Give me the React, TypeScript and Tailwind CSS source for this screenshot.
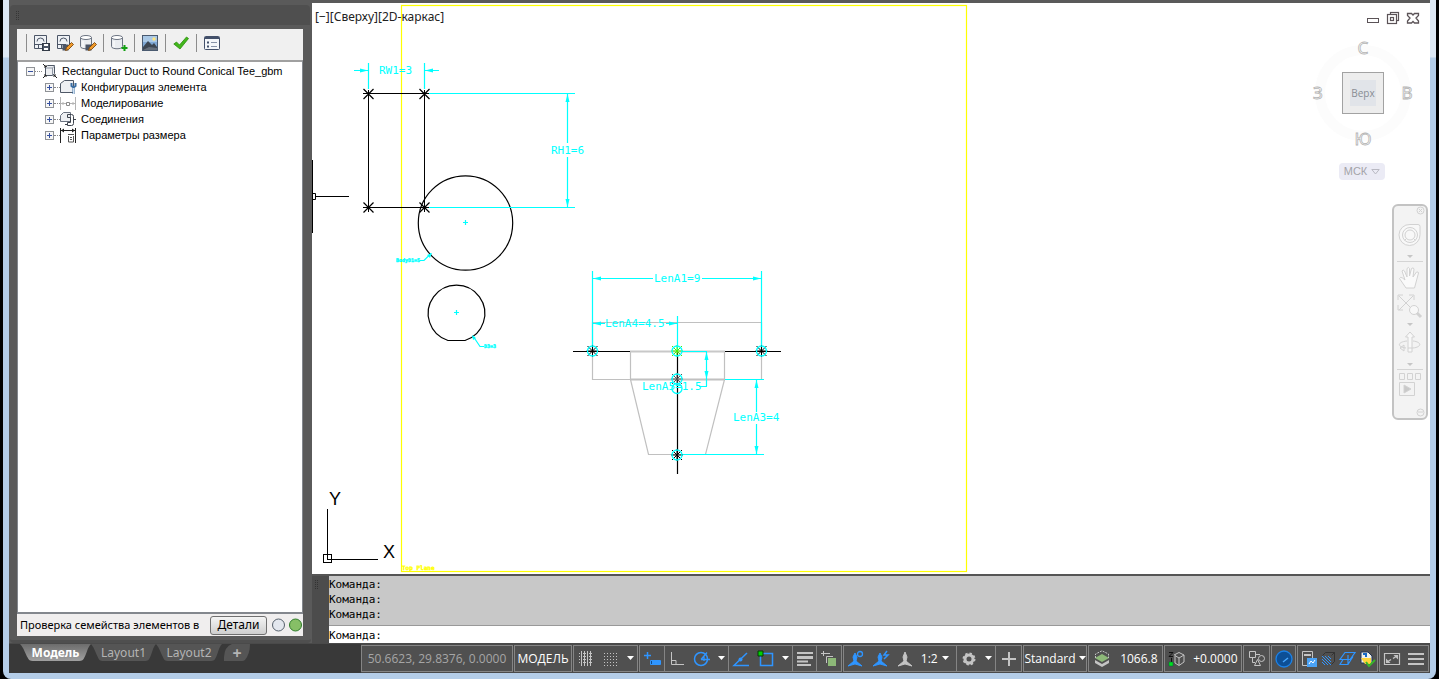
import { useState, type ReactNode } from "react";
import clsx from "clsx";

type Point = [number, number];

interface TreeItem {
  label: string;
  icon: ReactNode;
}

const BLUE = "#2f95ff";
const GRAY = "#c4c4c4";
const CYAN = "#00ffff";

/* ---------- Toolbar icons ---------- */

const Disk = () => (
  <g>
    <rect x="8.5" y="8.5" width="7" height="7" fill="#4b5566" stroke="#333b47" />
    <rect x="10" y="9" width="4" height="2" fill="#fff" />
    <rect x="10" y="13" width="4" height="2" fill="#fff" />
  </g>
);

const Pencil = () => (
  <path d="M8.5 15.5l1-3 5-5 2 2-5 5z" fill="#f09a2c" stroke="#7a4a12" strokeWidth=".9" />
);

const PartFrame = () => (
  <g fill="#eef1f5" stroke="#4b5566">
    <path d="M.5.5h12v13H.5z" />
    <path d="M3 6.500a3.500 3.500 0 1 1 7 0M1 9.500h8M4.500 10v3" fill="none" />
  </g>
);

const Cylinder = () => (
  <g fill="#e9ecf0" stroke="#6c7482">
    <path d="M.5 2.500v9c0 3 11 3 11 0v-9" />
    <ellipse cx="6" cy="2.500" rx="5.500" ry="2" fill="#fff" />
    <path d="M3 6v6" stroke="#fff" />
  </g>
);

const toolGroups: { name: string; icon: ReactNode }[][] = [
  [
    { name: "Сохранить", icon: <><PartFrame /><Disk /></> },
    { name: "Сохранить как", icon: <><PartFrame /><rect x="5.500" y="9.500" width="6" height="6" fill="#4b5566" /><Pencil /></> },
    { name: "Изменить каталог", icon: <><Cylinder /><rect x="5.500" y="9.500" width="6" height="6" fill="#4b5566" /><Pencil /></> },
  ],
  [
    {
      name: "Добавить в каталог",
      icon: <><Cylinder /><path d="M13.500 10v6M10.500 13h6" stroke="#12a012" strokeWidth="2" /></>,
    },
  ],
  [
    {
      name: "Изображение",
      icon: (
        <>
          <rect x=".5" y=".5" width="15" height="15" fill="#7fa8d4" stroke="#4a5a70" />
          <rect x="1" y="1" width="14" height="6" fill="#a9c8e6" />
          <path d="M1 12l5-6 4 4 2-2 3 4v3H1z" fill="#3d4652" />
          <path d="M1 15l6-3 8 1v2H1z" fill="#67707c" />
          <circle cx="12" cy="4" r="1.700" fill="#ffe680" />
        </>
      ),
    },
  ],
  [
    {
      name: "Проверить",
      icon: <path d="M.8 9l2.700-2 3 3L13.500 2l2 1.500L7 14z" fill="#42b81c" stroke="#2c8d0d" strokeWidth=".8" />,
    },
  ],
  [
    {
      name: "Свойства",
      icon: (
        <>
          <rect x=".5" y="1.500" width="15" height="13" rx="1" fill="#f4f7fa" stroke="#43506a" />
          <path d="M1 3h14" stroke="#43506a" strokeWidth="2" />
          <path d="M3 7.500h2M3 11.500h2" stroke="#43506a" strokeWidth="2" />
          <path d="M7 7.500h6M7 11.500h6" stroke="#8793a8" />
        </>
      ),
    },
  ],
];

const treeItems: TreeItem[] = [
  {
    label: "Конфигурация элемента",
    icon: (
      <>
        <path d="M.5 4.500l4-3h9v12H.5z" fill="#eef0f3" stroke="#4f5866" />
        <path d="M11.500 4v3l2 1.500 2-1.500V4M13.500 8v7" fill="none" stroke="#3b6ea3" strokeWidth="2" />
        <path d="M13.500 9v6" stroke="#cfe0f0" />
      </>
    ),
  },
  {
    label: "Моделирование",
    icon: (
      <>
        <path d="M.5 2v13M15.500 2v13" stroke="#b4b4b4" />
        <path d="M1 8.500h14M3 7v3M13 7v3" stroke="#b4b4b4" />
        <path d="M6.500 7.500h3v3h-3z" fill="#fff" stroke="#8a8a8a" />
      </>
    ),
  },
  {
    label: "Соединения",
    icon: (
      <>
        <path d="M.5 4.500l3-3h7v9h-10z" fill="#eef0f3" stroke="#6a7280" />
        <path d="M7.500 3.500h4q2 0 2 2v7q0 2-2 2h-4v-3h3v-5h-3zM5 13.500h3M14 8.500h2" fill="none" stroke="#3d434d" />
      </>
    ),
  },
  {
    label: "Параметры размера",
    icon: (
      <>
        <path d="M.5 1v15M15.500 1v15M1 3.500h14" stroke="#222" />
        <path d="M1 3.500l3-2v4zM15 3.500l-3-2v4z" fill="#222" />
        <path d="M8 7.500h6M8.500 9v6h5V9M10 10.500h2M10 12.500h2" fill="none" stroke="#555" />
      </>
    ),
  },
];

function Expander({ open }: { open?: boolean }) {
  return (
    <svg width="9" height="9" className="shrink-0" shapeRendering="crispEdges">
      <rect x=".5" y=".5" width="8" height="8" fill="#f6f6f6" stroke="#8f9296" />
      <path d={open ? "M2 4.500h5" : "M2 4.500h5M4.500 2v5"} stroke="#3550a0" />
    </svg>
  );
}

function LeftPanel() {
  return (
    <aside className="flex w-[303px] shrink-0 flex-col bg-[#5a5a5a] pt-[5px]">
      <div className="mb-1 ml-px mr-[2px] flex h-[20px] shrink-0 items-start rounded-t bg-[#4f4f4f] pl-[6px] pt-[6px]">
        <svg width="4" height="10">
          <path d="M.5 0v10M2.500 0v10" stroke="#363636" strokeDasharray="1 1" />
        </svg>
      </div>
      <div className="ml-2 mr-[9px] flex min-h-0 flex-1 flex-col bg-[#f0f0f0] text-black">
        <div className="flex h-[31px] shrink-0 items-center gap-[7px] pb-1 pl-[9px]">
          {toolGroups.map((group, i) => (
            <div key={i} className="flex items-center gap-[7px]">
              <span className="h-[18px] w-px bg-[#8c8c8c]" />
              {group.map((tool) => (
                <button key={tool.name} aria-label={tool.name} className="h-4 w-4">
                  <svg width="17" height="17" fill="none">{tool.icon}</svg>
                </button>
              ))}
            </div>
          ))}
        </div>
        <div className="min-h-0 flex-1 border-x border-y-2 border-[#83878d] border-t-[#a0a0a0] bg-white pl-2 pt-px font-['Liberation_Sans',sans-serif] text-[11px] leading-4">
          <button className="flex h-4 items-center">
            <Expander open />
            <span className="w-[7px] border-t border-dotted border-[#888]" />
            <svg width="16" height="16" className="shrink-0" fill="none">
              <path d="M3.500 4.500l2-2h7v8l-2 2h-7z" fill="#eceef1" stroke="#4f5866" />
              <path d="M4 5h6.500v7M10.500 5l2-2" stroke="#8d95a2" />
              <path d="M1 1l3 3M15 15l-3-3M1 15l3-3M2 4h2V2M12 14v-2h2M2 12h2v2" stroke="#222" />
            </svg>
            <span className="ml-1 whitespace-nowrap">Rectangular Duct to Round Conical Tee_gbm</span>
          </button>
          <ul className="ml-[19px]">
            {treeItems.map((item) => (
              <li key={item.label}>
                <button className="flex h-4 items-center">
                  <Expander />
                  <span className="w-[6px] border-t border-dotted border-[#888]" />
                  <svg width="17" height="16" className="shrink-0" fill="none">{item.icon}</svg>
                  <span className="ml-1 whitespace-nowrap">{item.label}</span>
                </button>
              </li>
            ))}
          </ul>
        </div>
        <div className="flex h-[22px] shrink-0 items-center bg-[#f0eeee] pl-[3px] font-['Noto_Sans',sans-serif] text-xs">
          <span className="w-[186px] shrink-0 whitespace-nowrap text-[11px]">Проверка семейства элементов в</span>
          <button className="ml-1 h-[19px] w-[57px] shrink-0 rounded-[3px] border border-[#707070] bg-linear-to-b from-[#f4f4f4] to-[#cfcfcf] leading-4">
            Детали
          </button>
          <svg width="32" height="16" className="ml-1 shrink-0">
            <circle cx="7.500" cy="8" r="6" fill="#e3e7ee" stroke="#55606c" />
            <circle cx="24.500" cy="8" r="6" fill="#86bf66" stroke="#2f7d2a" />
          </svg>
        </div>
      </div>
      <div className="mx-px h-[7px] shrink-0 rounded-b border-b-[3px] border-[#4f4f4f]" />
    </aside>
  );
}

/* ---------- Model space ---------- */

function Star({ at: [x, y], color = "#000" }: { at: Point; color?: string }) {
  return (
    <path
      d={`M${x - 5} ${y - 5}l10 10M${x - 5} ${y + 5}l10 -10M${x - 6} ${y}h12M${x} ${y - 6}v12`}
      stroke={color}
    />
  );
}

// Point marker of the profile: a plain cross over the line ends
function Cross({ at: [x, y] }: { at: Point }) {
  return <path d={`M${x - 5} ${y - 5}l10 10M${x - 5} ${y + 5}l10 -10`} stroke="#000" strokeWidth="1.200" />;
}

// Arrow head whose tip sits at the given point
function Arrow({ at: [x, y], dir }: { at: Point; dir: "l" | "r" | "u" | "d" }) {
  const shapes = {
    l: `M${x} ${y}l8 -2v4z`,
    r: `M${x} ${y}l-8 -2v4z`,
    u: `M${x} ${y}l-2 8h4z`,
    d: `M${x} ${y}l-2 -8h4z`,
  };
  return <path d={shapes[dir]} fill={CYAN} />;
}

function Connector({ at: [x, y], color }: { at: Point; color?: string }) {
  return (
    <g>
      <Star at={[x, y]} color={color} />
      <circle cx={x} cy={y} r="5" stroke={CYAN} strokeWidth="1.300" />
    </g>
  );
}

function Drawing() {
  return (
    <svg className="block h-full w-full" fill="none">
      <g transform="translate(-312 -3)">
        <rect x="401.500" y="5.500" width="565" height="566" stroke="#ffff00" strokeWidth="1.200" />

        {/* gray part outline */}
        <g stroke="#c0c0c0" strokeWidth="1.200">
          <path d="M592.500 322.500h169v57h-169zM630.500 351v28.500M724.500 351v28.500M630.500 379.500l18 75h57l19-75" />
          <path d="M631 379.500h94" strokeWidth="2" />
        </g>

        {/* profile and circles */}
        <g stroke="#000">
          <path d="M363 93.500h66M363 207.500h66M368.500 90v122M424.500 90v122" />
          <circle cx="465.500" cy="223" r="47.200" strokeWidth="1.200" />
          <path d="M448 340.500h17A28.300 28.300 0 1 0 448 340.500z" strokeWidth="1.200" />
          <path d="M312.500 160v73M316 196.500h33M312.500 193.500h3v6h-3z" />
          <path d="M573 351.500h208M677.500 351v123" strokeWidth="1.200" />
        </g>
        <path d="M630 351.500h95" stroke="#c8c8c8" strokeWidth="2" />

        {/* dimensions */}
        <g stroke={CYAN} strokeWidth="1.200">
          <path d="M368.500 63v26M424.500 63v26M354 70.500h14M425 70.500h14" />
          <path d="M429 93.500h146M429 207.500h146M567.500 94v49M567.500 157v50" />
          <path d="M592.500 271v80M761.500 271v80M593 278.500h60M702 278.500h60" />
          <path d="M677.500 316v35M593 323.500h12M666 323.500h12" />
          <path d="M682 351.500h25M706.500 352v34M699 386.500h8" />
          <path d="M725 379.500h39M682 454.500h82M756.500 380v32M756.500 424v30" />
          <path d="M463 222.500h5M465.500 220v5M454 312.500h5M456.500 310v5" />
          <path d="M420 260.500h4l7-7M473 336l7 10.500h4" />
        </g>
        <path d="M432 253l-5 2 3 3zM472 335l1 5 3-2z" fill={CYAN} />
        <Arrow at={[368, 70.5]} dir="r" />
        <Arrow at={[425, 70.5]} dir="l" />
        <Arrow at={[567.5, 94]} dir="u" />
        <Arrow at={[567.5, 207]} dir="d" />
        <Arrow at={[593, 278.5]} dir="l" />
        <Arrow at={[761, 278.5]} dir="r" />
        <Arrow at={[593, 323.5]} dir="l" />
        <Arrow at={[677, 323.5]} dir="r" />
        <Arrow at={[706.5, 352]} dir="u" />
        <Arrow at={[706.5, 379]} dir="d" />
        <Arrow at={[756.5, 380]} dir="u" />
        <Arrow at={[756.5, 454]} dir="d" />

        <Cross at={[368.5, 94]} />
        <Cross at={[424.5, 94]} />
        <Cross at={[368.5, 207.5]} />
        <Cross at={[424.5, 207.5]} />
        <Connector at={[592.5, 351]} />
        <Connector at={[761.5, 351]} />
        <Connector at={[677, 455]} />
        <Connector at={[677, 379]} color="#555" />
        <circle cx="677" cy="388.500" r="5" stroke={CYAN} strokeWidth="1.300" />
        <Connector at={[677, 351]} color="#44f500" />

        <g fill={CYAN} fontFamily="'DejaVu Sans Mono', monospace" fontSize="11">
          <text x="379" y="74">RW1=3</text>
          <text x="551" y="154">RH1=6</text>
          <text x="654" y="282">LenA1=9</text>
          <text x="605" y="327">LenA4=4.5</text>
          <text x="642" y="390">LenA5=1.5</text>
          <text x="733" y="421">LenA3=4</text>
          <g fontSize="5" fontWeight="bold" stroke={CYAN} strokeWidth=".4">
            <text x="396" y="262">BodyD1=5</text>
            <text x="484" y="348">D3=3</text>
          </g>
        </g>
        <text
          x="402"
          y="570"
          fill="#ffff00"
          stroke="#ffff00"
          strokeWidth=".4"
          fontFamily="'DejaVu Sans Mono', monospace"
          fontSize="6"
          fontWeight="bold"
        >
          Top Plane
        </text>
      </g>
    </svg>
  );
}

function UcsIcon() {
  return (
    <svg width="80" height="86" className="absolute bottom-2 left-[10px]" fill="none">
      <path d="M5.500 29v50.500H56M1.500 74.500h8v8h-8z" stroke="#000" shapeRendering="crispEdges" />
      <g fill="#000" fontFamily="'Liberation Sans', sans-serif" fontSize="18" textAnchor="middle">
        <text x="13" y="25">Y</text>
        <text x="67" y="78">X</text>
      </g>
    </svg>
  );
}

function ViewCube() {
  return (
    <div className="absolute right-4 top-[28px] flex w-[104px] flex-col items-center">
      <svg width="104" height="124" fill="none">
        <circle cx="53" cy="62" r="43" stroke="#fcfcfc" strokeWidth="10" />
        <g
          fill="#fff"
          stroke="#b4b4b4"
          strokeWidth=".8"
          fontFamily="'Noto Sans', sans-serif"
          fontSize="17"
          textAnchor="middle"
        >
          <text x="53" y="23">С</text>
          <text x="8" y="68">З</text>
          <text x="97" y="68">В</text>
          <text x="53" y="114">Ю</text>
        </g>
        <rect x="32.500" y="41.500" width="41" height="41" fill="#ededed" stroke="#a2a2a2" />
        <rect x="40" y="49" width="26" height="26" fill="#e1e4e9" />
        <text x="53" y="66" fill="#888d94" fontFamily="'Open Sans', sans-serif" fontSize="10" textAnchor="middle">
          Верх
        </text>
      </svg>
      <button className="mt-2 flex h-[17px] w-[46px] items-center justify-center gap-1 rounded bg-[#ebebf5] font-['Liberation_Sans',sans-serif] text-[11px] text-[#a3a3a8]">
        МСК
        <svg width="9" height="6" fill="none">
          <path d="M.8.5h7.400L4.500 5z" stroke="#b9b9c2" />
        </svg>
      </button>
    </div>
  );
}

function NavDivider() {
  return <span className="h-px w-[26px] shrink-0 bg-[#d4d4d4]" />;
}

function NavCaret() {
  return (
    <svg width="6" height="4" className="shrink-0">
      <path d="M0 0h6L3 3z" fill="#c6c6c6" />
    </svg>
  );
}

function NavigationBar() {
  return (
    <div className="absolute right-[2px] top-[201px] flex h-[216px] w-[36px] flex-col items-center rounded-md border-2 border-[#c3c3c3] bg-[#f3f3f3] text-[#d2d2d2]">
      <button aria-label="Закрыть" className="mr-px self-end">
        <svg width="9" height="9" fill="none" stroke="currentColor">
          <circle cx="4.500" cy="4.500" r="3.500" />
          <path d="M3 3l3 3M6 3l-3 3" />
        </svg>
      </button>
      <button aria-label="Штурвал" className="mt-2">
        <svg width="24" height="24" fill="none" stroke="currentColor">
          <path d="M12 1.500h8q2 0 2 2v8a10.500 10.500 0 1 1-10-10z" fill="#f8f8f8" />
          <circle cx="12" cy="12" r="7.500" />
          <circle cx="12" cy="12" r="5" />
          <path d="M6.500 17.500l2-2M17.500 17.500l-2-2" />
        </svg>
      </button>
      <span className="mt-2"><NavCaret /></span>
      <span className="mt-[2px] flex"><NavDivider /></span>
      <button aria-label="Панорамирование" className="mt-1">
        <svg width="24" height="24" fill="#fafafa" stroke="currentColor">
          <path d="M8 22L1.500 12.500q1-2 3-.5L7 14 4 5q1-2 2.500 0L9 11V2.500q1.500-2 2.500 0V10l2-7.500q2-1.500 2.500.500l-1 8 3.500-5q2-.5 2 1L16.500 22z" />
        </svg>
      </button>
      <button aria-label="Зумирование" className="mt-1">
        <svg width="26" height="25" fill="none" stroke="currentColor">
          <path d="M1 6V1h5M12 1h5v5M1 11v5h5M2 2l14 14M16 2L2 16" />
          <circle cx="17" cy="16" r="4.500" fill="#f8f8f8" />
          <path d="M20 19l4 4" strokeWidth="3" />
        </svg>
      </button>
      <span className="mt-1"><NavCaret /></span>
      <button aria-label="Орбита" className="mt-1">
        <svg width="24" height="24" fill="none" stroke="currentColor">
          <path d="M10 21V6H7.500L12 1l4.500 5H14v15z" fill="#f8f8f8" />
          <path d="M9 10c-10 1-10 6-1 7M15 10c9 1 9 6 0 7h-5M6 14v6l-4-3z" />
        </svg>
      </button>
      <span className="mt-2"><NavCaret /></span>
      <span className="mt-[2px] flex"><NavDivider /></span>
      <button aria-label="Показать движение" className="mt-[2px]">
        <svg width="24" height="25" fill="none" stroke="currentColor">
          <path d="M1.500 1.500h5v6h-5zM9.500 1.500h5v6h-5zM17.500 1.500h5v6h-5zM1.500 10.500h15v13h-15z" />
          <path d="M6 13l7 4-7 4z" fill="#c9c9c9" />
        </svg>
      </button>
      <button aria-label="Параметры" className="mb-px mr-px mt-auto self-end">
        <svg width="9" height="9" fill="none" stroke="currentColor">
          <circle cx="4.500" cy="4.500" r="3.500" />
          <path d="M2 4h5" />
        </svg>
      </button>
    </div>
  );
}

function WindowControls() {
  return (
    <div className="absolute right-[10px] top-2 flex items-center gap-[6px]">
      <button aria-label="Свернуть">
        <svg width="14" height="14" fill="none">
          <rect x="1.500" y="7.500" width="11" height="4" fill="#fff" stroke="#5b5357" />
        </svg>
      </button>
      <button aria-label="Восстановить">
        <svg width="14" height="14" fill="#fff" stroke="#5b5357" strokeWidth="1.200">
          <rect x="4.500" y="1.500" width="8" height="8" />
          <rect x="1.500" y="3.500" width="9" height="9" />
          <rect x="4.500" y="6.500" width="3" height="3" />
        </svg>
      </button>
      <button aria-label="Закрыть чертеж">
        <svg width="14" height="14" fill="#fff" stroke="#5b5357" strokeWidth="1.300">
          <path d="M1.500 2.500h4L7 4l1.500-1.500h4v2L10 7l2.500 3v2h-4L7 10.500 5.500 12h-4v-2L4 7 1.500 4.500z" />
        </svg>
      </button>
    </div>
  );
}

function Viewport() {
  return (
    <section className="relative min-h-0 flex-1 overflow-hidden bg-white">
      <Drawing />
      <div className="absolute left-[3px] top-[5px] whitespace-nowrap font-['Noto_Sans',sans-serif] text-xs leading-[18px] text-[#222]">
        <button>[−]</button>
        <button>[Сверху]</button>
        <button>[2D-каркас]</button>
      </div>
      <UcsIcon />
      <WindowControls />
      <ViewCube />
      <NavigationBar />
    </section>
  );
}

function CommandLine() {
  return (
    <div className="flex h-[67px] shrink-0 bg-[#4c4c4c] font-['DejaVu_Sans_Mono',monospace] text-[11px] leading-[15px] text-black">
      <div className="w-[17px] shrink-0 pl-[3px] pt-1">
        <svg width="4" height="10">
          <path d="M.5 0v10M2.500 0v10" stroke="#333" strokeDasharray="1 1" />
        </svg>
      </div>
      <div className="flex flex-1 flex-col">
        <div className="flex-1 border-b border-[#999] bg-[#c8c8c8] pt-px">
          <p>Команда:</p>
          <p>Команда:</p>
          <p>Команда:</p>
        </div>
        <div className="flex h-[17px] items-end bg-white">
          <label htmlFor="command">Команда:</label>
          <input id="command" className="ml-2 h-[14px] flex-1 outline-none" />
        </div>
      </div>
    </div>
  );
}

/* ---------- Bottom bar ---------- */

const layouts = [
  { label: "Модель", width: "w-[71px]" },
  { label: "Layout1", width: "w-[65px]" },
  { label: "Layout2", width: "w-[66px]" },
  { label: "+", width: "ml-[2px] w-[26px]" },
];

function LayoutTabs() {
  const [active, setActive] = useState("Модель");
  return (
    <div className="flex min-w-0 flex-1 items-start bg-[#393939] pl-[11px] font-['Noto_Sans',sans-serif] text-xs">
      {layouts.map(({ label, width }) => {
        const isActive = label === active;
        return (
          <button
            key={label}
            onClick={() => setActive(label)}
            className={clsx(
              "relative flex h-[17px] shrink-0 items-center justify-center leading-[14px]",
              width,
              isActive ? "font-bold text-white" : "text-[#b4b4b4]",
            )}
          >
            <svg viewBox="0 0 72 17" preserveAspectRatio="none" className="absolute inset-0 h-full w-full">
              <defs>
                <linearGradient id="tabOn" x2="0" y2="1">
                  <stop stopColor="#6c6c6c" />
                  <stop offset="1" stopColor="#a0a0a0" />
                </linearGradient>
              </defs>
              <path
                d={label === "+" ? "M0 17q-2-14 22-17h50q0 10-14 16-3 1-8 1z" : "M0 0h72c-4 4-4 9-7 14q-1 3-5 3H13q-4 0-5-3C5 9 4 4 0 0z"}
                fill={isActive ? "url(#tabOn)" : "#555"}
              />
            </svg>
            <span className={clsx("relative", label === "+" && "text-base/[14px] font-bold")}>{label}</span>
          </button>
        );
      })}
    </div>
  );
}

function Segment({ className, children }: { className: string; children: ReactNode }) {
  return (
    <div
      className={clsx(
        "mr-px flex h-[27px] shrink-0 items-center justify-around whitespace-nowrap border border-[#858585] bg-[#505050]",
        className,
      )}
    >
      {children}
    </div>
  );
}

function Tool({ name, width = 18, children }: { name: string; width?: number; children: ReactNode }) {
  return (
    <button aria-label={name} className="shrink-0">
      <svg width={width} height="18" viewBox={`0 0 ${width} 18`} fill="none">{children}</svg>
    </button>
  );
}

function Triangle() {
  return (
    <svg width="7" height="5">
      <path d="M0 0h7L3.500 4z" fill="#fff" />
    </svg>
  );
}

function Caret() {
  return (
    <button aria-label="Список" className="shrink-0">
      <Triangle />
    </button>
  );
}

function Cell({ className, children }: { className: string; children: ReactNode }) {
  return <div className={clsx("flex h-full items-center justify-around", className)}>{children}</div>;
}

function StatusBar() {
  return (
    <div className="flex shrink-0 items-start bg-[#4a4a4a] pt-px font-['Open_Sans',sans-serif] text-xs text-white">
      <Segment className="w-[152px] text-[#a6a6a6]">50.6623, 29.8376, 0.0000</Segment>
      <Segment className="w-[58px]"><button>МОДЕЛЬ</button></Segment>
      <Segment className="w-[65px]">
        <Tool name="Сетка">
          <path d="M4.500 1v15M7.500 1v15M10.500 1v15M13.500 1v15" stroke={GRAY} />
          <path d="M2 3.500h14M2 6.500h14M2 9.500h14M2 12.500h14" stroke={GRAY} strokeDasharray="1 1" />
        </Tool>
        <Tool name="Шаг">
          <path d="M2 3.500h14M2 6.500h14M2 9.500h14M2 12.500h14M2 15.500h14" stroke={GRAY} strokeDasharray="1 2" />
        </Tool>
        <Caret />
      </Segment>
      <Segment className="w-[203px] divide-x divide-[#858585]">
        <Cell className="w-[25px]">
          <Tool name="Динамический ввод">
            <path d="M4.500 2v7M1 5.500h7" stroke={BLUE} strokeWidth="1.500" />
            <rect x="7" y="10" width="11" height="5" rx="1" fill={BLUE} />
            <path d="M8.500 11v3" stroke="#0a4a90" />
          </Tool>
        </Cell>
        <Cell className="w-[64px]">
          <Tool name="Орто"><path d="M3.500 2v12.500H16M4 10.500h4v4" stroke={GRAY} /></Tool>
          <Tool name="Полярное отслеживание">
            <circle cx="8" cy="9" r="6.500" stroke={BLUE} strokeWidth="1.500" />
            <path d="M8 9.500h9M8 9.500l6-7M11 6v5" stroke={BLUE} strokeWidth="1.300" />
          </Tool>
          <Caret />
        </Cell>
        <Cell className="w-[64px]">
          <Tool name="Отслеживание">
            <path d="M15 3L2 15.500h15" stroke={BLUE} strokeWidth="1.500" />
            <circle cx="8.500" cy="9.500" r="2" fill={BLUE} />
          </Tool>
          <Tool name="Привязка">
            <path d="M3.500 3.500h12v12h-12z" stroke={BLUE} strokeWidth="1.500" />
            <path d="M1 1h5v5H1z" fill="#00d000" stroke="#043804" />
          </Tool>
          <Caret />
        </Cell>
        <Cell className="w-[24px]">
          <Tool name="Вес линий">
            <path d="M1 3h16" stroke={GRAY} strokeWidth="2" />
            <path d="M1 7.500h16" stroke={GRAY} strokeWidth="3" />
            <path d="M1 11.500h11M1 15h14" stroke={GRAY} strokeWidth="2" />
          </Tool>
        </Cell>
        <Cell className="w-[24px]">
          <Tool name="Циклический выбор">
            <path d="M3.500 1v5M1 3.500h5M6 3.500h4M6.500 13V6.500H13" stroke={GRAY} />
            <path d="M8 8h8v8H8z" fill="#8db878" />
          </Tool>
        </Cell>
      </Segment>
      <Segment className="w-[179px] divide-x divide-[#858585]">
        <Cell className="w-[113px]">
          <Tool name="Видимость аннотаций">
            <path d="M8 3l2 4-1 4 6 5-7-2-7 2 6-5-1-4z" fill={BLUE} stroke={BLUE} />
            <circle cx="13" cy="4" r="2.500" stroke={BLUE} strokeWidth="1.300" />
          </Tool>
          <Tool name="Масштаб аннотаций">
            <path d="M8 3l2 4-1 4 6 5-7-2-7 2 6-5-1-4z" fill={BLUE} stroke={BLUE} />
            <path d="M15 1l-3 4h4l-4 4" stroke={BLUE} strokeWidth="1.500" />
          </Tool>
          <Tool name="Аннотация">
            <path d="M9 2l2 5-1 4 6 5-7-2-7 2 6-5-1-4z" fill={GRAY} stroke={GRAY} />
          </Tool>
          <button className="flex items-center gap-1 pr-1">1:2 <Triangle /></button>
        </Cell>
        <Cell className="w-[39px]">
          <Tool name="Рабочее пространство">
            <circle cx="9" cy="9" r="4" stroke={GRAY} strokeWidth="3" />
            <circle cx="9" cy="9" r="5.500" stroke={GRAY} strokeWidth="2" strokeDasharray="2.300 2" />
          </Tool>
          <Caret />
        </Cell>
        <Cell className="w-[25px]">
          <Tool name="Монитор"><path d="M9 2v14M2 9h14" stroke={GRAY} strokeWidth="2" /></Tool>
        </Cell>
      </Segment>
      <Segment className="w-[64px]">
        <button className="flex items-center gap-[3px]">Standard <Triangle /></button>
      </Segment>
      <Segment className="w-[75px]">
        <Tool name="Уровень">
          <path d="M2 10l7 4 7-4v3l-7 4-7-4z" fill={GRAY} />
          <path d="M2 8l7-4 7 4-7 4z" fill="#8db878" />
          <path d="M2.500 8V4L9 .8 15.500 4v4" stroke={GRAY} strokeDasharray="2 1" />
        </Tool>
        <span>1066.8</span>
      </Segment>
      <Segment className="w-[78px]">
        <Tool name="Отметка">
          <path d="M6 5l5-2.500 5 2.500v7l-5 3.500L7 13V5.500l4 2.500 5-3M11 8v7" stroke={GRAY} />
          <path d="M1 2.500h4L1 6.500h4M3.500 8v4" stroke="#111" />
          <path d="M1 12h4v4H1z" fill="#00e020" stroke="#063" strokeWidth=".5" />
        </Tool>
        <span>+0.0000</span>
      </Segment>
      <Segment className="w-[27px]">
        <Tool name="Изоляция">
          <path d="M1.500 1.500h6v6h-6zM6.500 15.500l3-6 3 6zM4.500 8v4.500H7M8 4.500h4" stroke={GRAY} />
          <circle cx="13.500" cy="8.500" r="3" stroke={GRAY} />
        </Tool>
      </Segment>
      <Segment className="w-[25px]">
        <Tool name="Производительность">
          <circle cx="9" cy="9" r="8" fill="#0d4f96" stroke="#1b82e8" strokeWidth="1.300" />
          <path d="M8 12l5-4" stroke="#49a8ff" strokeWidth="1.500" />
        </Tool>
      </Segment>
      <Segment className="w-[81px]">
        <Tool name="Замена">
          <path d="M2.500 1.500h10v14h-10z" stroke={GRAY} />
          <path d="M4 5h7" stroke={GRAY} strokeWidth="2" />
          <path d="M7 8h10v9H7z" fill="#4aa2f5" />
          <path d="M9 14l2-3 2 2 2-3" stroke="#fff" />
        </Tool>
        <Tool name="Штриховка" width={14}>
          <path d="M1.500 5.500l3-3h9v9l-3 3M13.500 2.500l-3 3" stroke="#333" />
          <path d="M1 6l9 9M1 9l6 6M1 12l3 3M4 6l6 6M7 6l3 3" stroke={BLUE} />
        </Tool>
        <Tool name="Плоскость">
          <path d="M7 2.500h10l-5 7H2zM5 9.500l-3 5h8l5-8M10 5v9" stroke={BLUE} strokeWidth="1.200" />
        </Tool>
        <Tool name="Сведения" width={17}>
          <path d="M2 2h7l4 4v7H2z" fill="#eef0ea" stroke="#20355a" />
          <path d="M2 8h10v6H6z" fill="#ffd43a" />
          <path d="M4 4h3v3" stroke="#1769c5" strokeWidth="2" />
          <path d="M7 12l3 4 6-6" stroke="#38b52b" strokeWidth="2" />
        </Tool>
      </Segment>
      <Segment className="w-[50px]">
        <Tool name="Полный экран">
          <path d="M1.500 3.500h15v11h-15z" stroke={GRAY} strokeWidth="1.200" />
          <path d="M10.500 5H15v4.500zM3 8.500V13h4.500z" fill={GRAY} />
          <path d="M10 8.500l3-2M5 11.500l3-2" stroke={GRAY} strokeWidth="1.500" />
        </Tool>
        <Tool name="Настройка"><path d="M1 4h16M1 9h16M1 14h16" stroke={GRAY} strokeWidth="2" /></Tool>
      </Segment>
    </div>
  );
}

export default function App() {
  return (
    <div className="flex h-screen flex-col overflow-hidden bg-black px-[3px]">
      <div className="flex min-h-0 flex-1 flex-col rounded-b-lg bg-linear-to-b from-[#dde8f4] from-[57px] to-[#b4cde8] to-[58px] px-[6px] pb-[6px]">
        <main className="flex min-h-0 flex-1 flex-col bg-[#5a5a5a]">
          <div className="flex min-h-0 flex-1">
            <LeftPanel />
            <div className="flex min-w-0 flex-1 flex-col pt-[3px]">
              <Viewport />
              <div className="h-[2px] shrink-0 bg-[#555]" />
              <CommandLine />
            </div>
          </div>
          <div className="flex h-[30px] shrink-0 border-t border-[#4a4a4a]">
            <LayoutTabs />
            <StatusBar />
          </div>
        </main>
      </div>
    </div>
  );
}
